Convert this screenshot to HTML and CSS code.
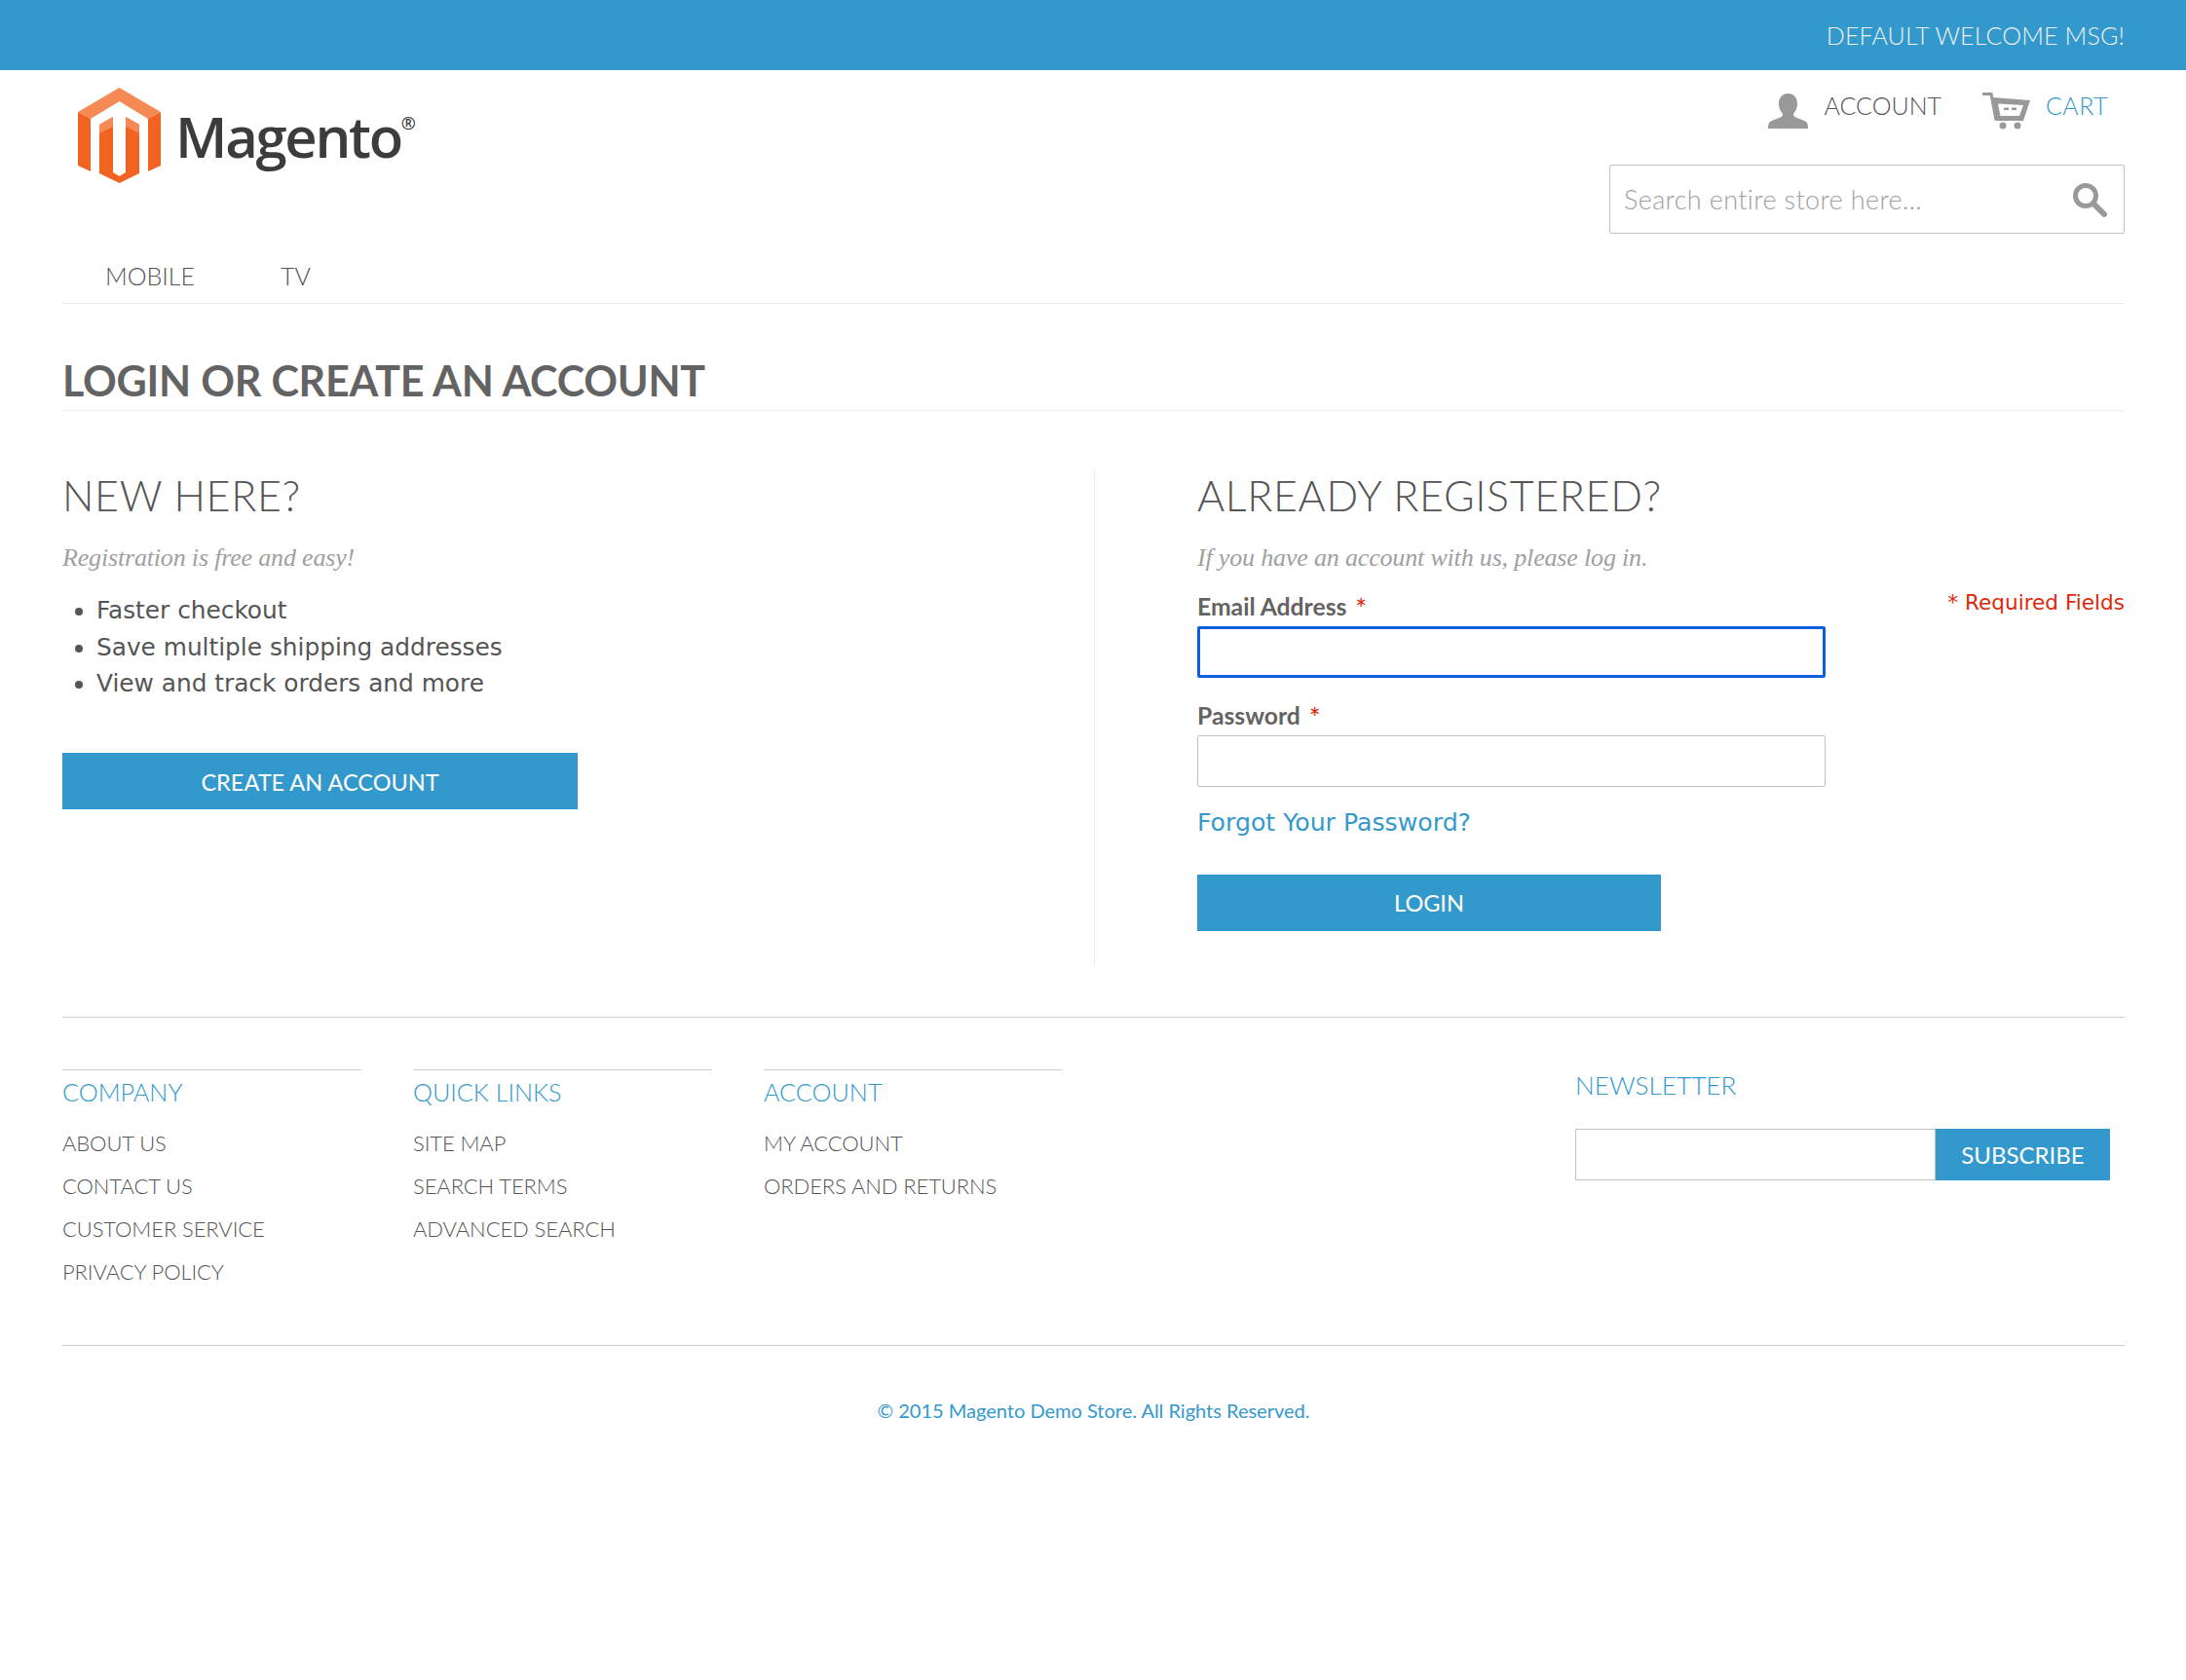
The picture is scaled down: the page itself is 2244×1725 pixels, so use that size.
FILE: index.html
```html
<!DOCTYPE html>
<html>
<head>
    <title>Customer Login</title>
    <meta charset="UTF-8">
    <link rel="stylesheet" href="styles.css">
</head>
<body>
    <div class="welcome-bar">DEFAULT WELCOME MSG!</div>

    <div class="page">
        <header class="header">
            <a class="logo" href="#">
                <svg class="logo-mark" viewBox="0 0 85 98" width="85" height="98">
                    <polygon fill="#f68a54" points="42.5,0 85,25 72,32 42.5,14 13,32 0,25"/>
                    <polygon fill="#f26322" points="0,25 13,32 13,86 0,80"/>
                    <polygon fill="#f26322" points="85,25 72,32 72,86 85,80"/>
                    <polygon fill="#f26322" points="22,38 36,30 36,87 42.5,91 49,87 49,30 63,38 63,88 42.5,98 22,88"/>
                    <polygon fill="#f68a54" points="22,38 36,30 36,40 22,47"/>
                    <polygon fill="#f68a54" points="63,38 49,30 49,40 63,47"/>
                </svg>
                <span class="logo-text">Magento<sup class="logo-reg">®</sup></span>
            </a>
            <div class="header-right">
                <div class="header-links">
                    <a class="header-link" href="#">
                        <svg class="icon-person" viewBox="0 0 41 36" width="41" height="36">
                            <path fill="#999" d="M20.5 0c6 0 9.500 4.500 9.500 10.500 0 4-1.500 7.500-3.500 9.500-.8 1.500-.5 3 1 4 3 1.500 9 3 12 5.500 1 1 1.500 3 1.500 6.500H0c0-3.500.5-5.500 1.500-6.500 3-2.500 9-4 12-5.500 1.500-1 1.800-2.500 1-4-2-2-3.500-5.500-3.500-9.500C11 4.500 14.500 0 20.500 0z"/>
                        </svg>
                        ACCOUNT
                    </a>
                    <a class="header-link cart-link" href="#">
                        <svg class="icon-cart" viewBox="0 0 49 38" width="49" height="38">
                            <path fill="none" stroke="#999" stroke-width="3" d="M0 1.500h9l5 27"/>
                            <path fill="#999" d="M10 5l39 3-7 21H14z"/>
                            <path fill="#fff" d="M16 11.500l26 1.500-4 11H18.500z"/>
                            <rect fill="#999" x="22" y="15.500" width="5" height="2.500"/>
                            <rect fill="#999" x="30" y="15.500" width="5" height="2.500"/>
                            <circle fill="#999" cx="21" cy="34" r="3.500"/>
                            <circle fill="#999" cx="36" cy="34" r="3.500"/>
                        </svg>
                        <span class="cart-label">CART</span>
                    </a>
                </div>
                <form class="search-box">
                    <input class="search-input" type="text" placeholder="Search entire store here...">
                    <svg class="icon-search" viewBox="0 0 36 36" width="36" height="36">
                        <circle cx="14" cy="14" r="10.500" fill="none" stroke="#999" stroke-width="5"/>
                        <line x1="22" y1="22" x2="33" y2="33" stroke="#999" stroke-width="6" stroke-linecap="round"/>
                    </svg>
                </form>
            </div>
        </header>

        <nav class="main-nav">
            <a href="#">MOBILE</a>
            <a href="#">TV</a>
        </nav>

        <h1 class="page-title">LOGIN OR CREATE AN ACCOUNT</h1>

        <div class="account-login">
            <section class="col-new">
                <h2 class="col-title">NEW HERE?</h2>
                <p class="col-desc">Registration is free and easy!</p>
                <ul class="benefits">
                    <li>Faster checkout</li>
                    <li>Save multiple shipping addresses</li>
                    <li>View and track orders and more</li>
                </ul>
                <a class="btn btn-create" href="#">CREATE AN ACCOUNT</a>
            </section>
            <section class="col-registered">
                <h2 class="col-title">ALREADY REGISTERED?</h2>
                <p class="col-desc">If you have an account with us, please log in.</p>
                <p class="required-note">* Required Fields</p>
                <form>
                    <label class="field-label" for="email">Email Address <em>*</em></label>
                    <input class="field-input is-focus" type="email" id="email">
                    <label class="field-label label-pass" for="pass">Password <em>*</em></label>
                    <input class="field-input" type="password" id="pass">
                    <a class="forgot" href="#">Forgot Your Password?</a>
                    <button class="btn btn-login" type="button">LOGIN</button>
                </form>
            </section>
        </div>

        <footer class="footer">
            <div class="footer-top">
                <div class="footer-col">
                    <h3 class="footer-title">COMPANY</h3>
                    <a href="#">ABOUT US</a>
                    <a href="#">CONTACT US</a>
                    <a href="#">CUSTOMER SERVICE</a>
                    <a href="#">PRIVACY POLICY</a>
                </div>
                <div class="footer-col">
                    <h3 class="footer-title">QUICK LINKS</h3>
                    <a href="#">SITE MAP</a>
                    <a href="#">SEARCH TERMS</a>
                    <a href="#">ADVANCED SEARCH</a>
                </div>
                <div class="footer-col">
                    <h3 class="footer-title">ACCOUNT</h3>
                    <a href="#">MY ACCOUNT</a>
                    <a href="#">ORDERS AND RETURNS</a>
                </div>
                <div class="newsletter">
                    <h3 class="newsletter-title">NEWSLETTER</h3>
                    <form class="newsletter-form">
                        <input class="newsletter-input" type="text">
                        <button class="newsletter-btn" type="button">SUBSCRIBE</button>
                    </form>
                </div>
            </div>
            <p class="copyright">© 2015 Magento Demo Store. All Rights Reserved.</p>
        </footer>
    </div>
</body>
</html>
```

FILE: styles.css
```css
* {
    box-sizing: border-box;
}

html, body {
    margin: 0;
    padding: 0;
    background-color: #fff;
}

body {
    min-height: 1725px;
    font-family: "Lato", "Liberation Sans", sans-serif;
    font-weight: 300;
    color: #555;
}

a {
    color: inherit;
    text-decoration: none;
}

/* top bar */
.welcome-bar {
    height: 72px;
    padding-right: 63px;
    background-color: #3399cc;
    color: #f0f0f0;
    font-size: 25px;
    letter-spacing: .15px;
    line-height: 72px;
    text-align: right;
}

.page {
    padding: 0 63px 0 64px;
}

/* header */
.header {
    display: flex;
    justify-content: space-between;
    height: 169px;
}

.logo {
    display: flex;
    align-items: flex-start;
    margin: 18px 0 0 16px;
    height: 100px;
}

.logo-text {
    margin: 17px 0 0 15px;
    font-family: "Open Sans", "Liberation Sans", sans-serif;
    font-size: 58px;
    font-weight: 600;
    letter-spacing: -2.3px;
    line-height: 66px;
    color: #3c3c3c;
}

.logo-reg {
    margin-left: 0;
    font-size: 18px;
    letter-spacing: 0;
    vertical-align: top;
    line-height: 38px;
}

.header-right {
    display: flex;
    flex-direction: column;
    align-items: flex-end;
}

.header-links {
    display: flex;
    align-items: center;
    gap: 42px;
    height: 60px;
    margin: 6px 17px 31px 0;
}

.header-link {
    display: flex;
    align-items: center;
    gap: 16px;
    font-size: 25px;
}

.header-link svg {
    margin-top: 11px;
}

.cart-link {
    gap: 16px;
    letter-spacing: .45px;
}

.cart-label {
    color: #3399cc;
}

.search-box {
    display: flex;
    align-items: center;
    justify-content: space-between;
    width: 529px;
    height: 71px;
    padding: 0 17px 0 14px;
    border: 1px solid #c2c2c2;
    border-radius: 2px;
}

.search-input {
    flex: 1;
    border: none;
    outline: none;
    padding: 0;
    font-family: inherit;
    font-weight: 300;
    font-size: 27px;
    letter-spacing: .37px;
}

.search-input::placeholder {
    color: #a0a0a0;
    opacity: 1;
}

/* nav */
.main-nav {
    display: flex;
    gap: 88px;
    height: 71px;
    padding: 27px 0 0 44px;
    border-bottom: 1px solid #ededed;
    font-size: 25px;
    line-height: 30px;
}

/* title */
.page-title {
    height: 110px;
    margin: 0;
    padding-top: 53px;
    border-bottom: 1px solid #ededed;
    font-size: 43px;
    font-weight: 700;
    letter-spacing: -.22px;
    line-height: 52px;
    color: #636363;
}

/* two columns */
.account-login {
    display: flex;
    margin-top: 61px;
    height: 508px;
}

.col-new {
    width: 1060px;
    border-right: 1px solid #ededed;
}

.col-registered {
    position: relative;
    flex: 1;
    padding-left: 105px;
}

.col-title {
    margin: 0;
    font-size: 43px;
    font-weight: 300;
    letter-spacing: .65px;
    line-height: 52px;
}

.col-desc {
    margin: 20px 0 0;
    font-family: "Liberation Serif", serif;
    font-size: 26px;
    font-style: italic;
    letter-spacing: -.17px;
    line-height: 36px;
    color: #a0a0a0;
}

.benefits {
    margin: 17px 0 0;
    padding-left: 35px;
    font-family: "DejaVu Sans", sans-serif;
    font-size: 24.8px;
    font-weight: 400;
    line-height: 37.7px;
}

.btn {
    display: block;
    border: none;
    background-color: #3399cc;
    color: #fff;
    font-family: inherit;
    font-size: 23.5px;
    font-weight: 400;
    text-align: center;
}

.btn-create {
    width: 529px;
    height: 58px;
    margin-top: 52px;
    line-height: 60px;
}

.required-note {
    position: absolute;
    top: 122px;
    right: 0;
    margin: 0;
    font-family: "DejaVu Sans", sans-serif;
    font-size: 21.6px;
    font-weight: 400;
    line-height: 28px;
    color: #df280a;
}

.field-label {
    display: block;
    margin-top: 17px;
    font-size: 24.7px;
    font-weight: 700;
    line-height: 30px;
    color: #636363;
}

.field-label em {
    margin-left: 3px;
    font-size: 28px;
    line-height: 20px;
    vertical-align: -4px;
    font-style: normal;
    font-weight: 400;
    color: #df280a;
}

.label-pass {
    margin-top: 24px;
}

.field-input {
    display: block;
    width: 645px;
    height: 53px;
    border: 1px solid #c2c2c2;
    border-radius: 2px;
    outline: none;
    margin-top: 5px;
}

.is-focus {
    border: 3px solid #0a5fdc;
}

.forgot {
    display: block;
    margin-top: 19px;
    font-family: "DejaVu Sans", sans-serif;
    font-size: 25.2px;
    font-weight: 400;
    line-height: 36px;
    color: #3399cc;
}

.btn-login {
    width: 476px;
    height: 58px;
    margin-top: 35px;
}

/* footer */
.footer {
    margin-top: 53px;
    border-top: 1px solid #ccc;
}

.footer-top {
    display: flex;
    height: 337px;
    padding-top: 53px;
    border-bottom: 1px solid #ccc;
}

.footer-col {
    width: 307px;
    margin-right: 53px;
    border-top: 1px solid #ccc;
}

.footer-col a {
    display: block;
    height: 44px;
    font-size: 22px;
    letter-spacing: -.1px;
    line-height: 30px;
}

.footer-title,
.newsletter-title {
    margin: 0;
    font-size: 26.2px;
    font-weight: 300;
    line-height: 30px;
    color: #3399cc;
}

.footer-title {
    margin: 7px 0 23px;
    font-size: 25.2px;
}

.newsletter {
    margin-left: 473px;
    margin-top: 1px;
}

.newsletter-form {
    display: flex;
    margin-top: 30px;
}

.newsletter-input {
    width: 370px;
    height: 53px;
    border: 1px solid #c2c2c2;
    outline: none;
}

.newsletter-btn {
    width: 179px;
    height: 53px;
    border: none;
    background-color: #3399cc;
    color: #fff;
    font-family: inherit;
    font-size: 24px;
    font-weight: 400;
}

.copyright {
    margin: 53px 0 0;
    font-size: 20px;
    font-weight: 400;
    line-height: 26px;
    text-align: center;
    color: #3399cc;
}
```
